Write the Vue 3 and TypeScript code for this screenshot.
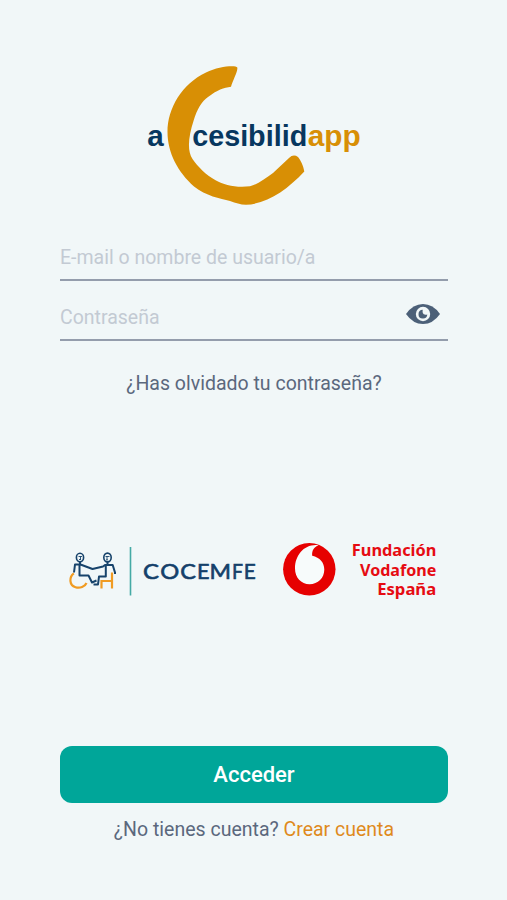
<script setup lang="ts">
import { ref } from 'vue'

interface Letter {
  char: string
  x: number
  width: number
}

const user = ref<string>('')
const password = ref<string>('')
const visible = ref<boolean>(false)

const wordmark: Letter[] = [
  { char: 'C', x: 75, width: 16 },
  { char: 'O', x: 92.3, width: 19 },
  { char: 'C', x: 112.2, width: 15.7 },
  { char: 'E', x: 129, width: 12.5 },
  { char: 'M', x: 141.6, width: 21.5 },
  { char: 'F', x: 164, width: 11 },
  { char: 'E', x: 175.8, width: 12 },
]
</script>

<template>
  <main class="screen">
    <svg class="logo" viewBox="0 0 230 160" role="img" aria-label="accesibilidapp">
      <path
        fill="#d88f05"
        d="M97.300 12.500C96 10 79 11 66 17.500C42 29 27.500 53 27.500 77C27.500 98 38 117 54 131.500C66 141 80 143.500 90 146C96 148 100 149.700 106 149.700C127 149 147 135 164.300 116.500C163.500 111 160.500 105 158 102C155 99.800 152 100 149 103L133 118C125 124 117 129.500 110 131.300C96 133 84 130 76 125.500C66 120 58 112 52.500 104C46.500 95 49 80 53.500 66C57 54 62 46 68 42C77 35 84 32.500 91 31.700C93 25 98 16 97.300 12.500Z"
      />
      <g class="brand" fill="#07375f">
        <text x="7.3" y="90.700" textLength="16.5" lengthAdjust="spacingAndGlyphs">a</text>
        <text x="52.2" y="90.700" textLength="115" lengthAdjust="spacingAndGlyphs">cesibilid</text>
        <text x="167.800" y="90.700" textLength="53" lengthAdjust="spacingAndGlyphs" fill="#d88f05">app</text>
      </g>
    </svg>

    <form class="form" @submit.prevent>
      <div class="field">
        <input v-model="user" type="text" placeholder="E-mail o nombre de usuario/a" />
      </div>
      <div class="field">
        <input v-model="password" :type="visible ? 'text' : 'password'" placeholder="Contraseña" />
        <button class="eye" type="button" aria-label="Mostrar contraseña" @click="visible = !visible">
          <svg viewBox="0 0 34 20">
            <path fill="#4c6078" d="M0 10Q7 0 17 0T34 10Q27 20 17 20T0 10Z" />
            <circle cx="17" cy="10" r="7.200" fill="#f1f7f8" />
            <path fill="#4c6078" d="M16.800 5.800A4.400 4.400 0 1 0 21.300 10.500Q17.500 11.200 16.800 9Q16.300 7.300 16.800 5.800Z" />
          </svg>
        </button>
      </div>
      <a class="forgot"><span>¿Has olvidado tu contraseña?</span></a>

      <div class="partners">
        <svg class="cocemfe" viewBox="0 0 190 62" role="img" aria-label="COCEMFE">
          <g fill="none" stroke="#f09b22" stroke-width="2.200">
            <path d="M5.800 33.300C1 37 1 45 7.500 47.200C12 48.700 17 46.500 18.500 43" />
            <path d="M33.500 48.500V41H43.500M44 32.500V48.500" />
          </g>
          <g fill="none" stroke="#17436b" stroke-width="2" stroke-linejoin="round">
            <ellipse cx="12" cy="17.500" rx="3.600" ry="4.200" stroke-width="1.600" />
            <ellipse cx="39.500" cy="17.500" rx="3.700" ry="4.400" stroke-width="1.600" />
            <path d="M10.500 16.500H14M12.500 16.500V19.500M37.500 16.500H41.500M39 16.500V19.500M11 19.500H13M38 19.800H40" stroke-width="0.900" />
            <path d="M12 22V24.500M39.500 22V25M6 32.500L7 24.500H12.500L24.500 29L35 26.500L37 25H44.700L47 32.500V34M11.500 25.500V35.500H20.500L24 42.500L28.500 40.500M37.800 26V36.500H31L30 44.500H25.500" />
          </g>
          <path d="M62.500 7V55.500" stroke="#45aaa5" stroke-width="1.600" />
          <text class="wordmark" y="39.300"><tspan
            v-for="(letter, i) in wordmark"
            :key="i"
            :x="letter.x"
            :textLength="letter.width"
            lengthAdjust="spacingAndGlyphs"
          >{{ letter.char }}</tspan></text>
        </svg>
        <svg class="vodafone" viewBox="0 0 165 70" role="img" aria-label="Fundación Vodafone España">
          <circle cx="34.300" cy="34.300" r="26.200" fill="#e60000" />
          <path fill="#f7fbfb" d="M43.500 10.200C39 12 36.700 15.500 37.200 20.700C45 22.500 49.300 27.500 49.300 34.500C49.300 43 43 49.200 34.600 49.200C26 49.200 20 42.500 20 33.500C20 20 29.500 8.500 43.500 10.200Z" />
          <g class="foundation" fill="#e60b12">
            <text x="76.800" y="21.300" textLength="84.500" lengthAdjust="spacingAndGlyphs">Fundación</text>
            <text x="85" y="40.500" textLength="76.300" lengthAdjust="spacingAndGlyphs">Vodafone</text>
            <text x="102.200" y="59.700" textLength="59" lengthAdjust="spacingAndGlyphs">España</text>
          </g>
        </svg>
      </div>

      <button class="submit" type="submit">Acceder</button>
      <p class="signup"><span>¿No tienes cuenta? <a>Crear cuenta</a></span></p>
    </form>
  </main>
</template>

<style>
body {
  background: #f1f7f8;
}
</style>

<style scoped>
.screen {
  box-sizing: border-box;
  width: 507px;
  height: 900px;
  padding: 55px 59px 0 60px;
  background: #f1f7f8;
  font-family: Roboto, sans-serif;
  font-size: 19.5px;
  color: #5b687d;
}
.logo {
  display: block;
  width: 230px;
  height: 160px;
  margin-left: 80px;
}
.brand {
  font: bold 30px "Liberation Sans", sans-serif;
}
.form {
  display: flex;
  flex-direction: column;
  padding-top: 21px;
}
.field {
  box-sizing: border-box;
  display: flex;
  align-items: flex-start;
  height: 60px;
  border-bottom: 2px solid #949dac;
}
.field:first-child {
  height: 45px;
}
.field + .field {
  padding-top: 15px;
}
input {
  flex: 1;
  min-width: 0;
  height: 42px;
  padding: 0;
  border: 0;
  outline: 0;
  background: transparent;
  font: inherit;
  color: #5b687d;
}
input::placeholder {
  color: #c3cad3;
  opacity: 1;
}
.eye {
  width: 34px;
  height: 20px;
  margin: 8px 8px 0 0;
  padding: 0;
  border: 0;
  background: none;
}
.eye svg {
  display: block;
  width: 34px;
  height: 20px;
}
.forgot {
  height: 24px;
  margin-top: 30px;
  line-height: 25px;
  text-align: center;
}
.partners {
  display: flex;
  height: 70px;
  margin-top: 140px;
}
.cocemfe {
  flex: none;
  width: 190px;
  height: 62px;
  margin: 5px 17px 0 8px;
}
.vodafone {
  flex: none;
  width: 165px;
  height: 70px;
}
.wordmark {
  fill: #14406a;
  stroke: #14406a;
  stroke-width: 0.6px;
  font: 400 20.800px Lato, sans-serif;
}
.foundation {
  font: bold 16px "Noto Sans", sans-serif;
}
.submit {
  height: 57px;
  margin-top: 141px;
  border: 0;
  border-radius: 12px;
  background: #00a699;
  color: #fff;
  font: 500 22px Roboto, sans-serif;
}
.signup {
  margin: 14px 0 0;
  line-height: 25px;
  text-align: center;
}
.signup a {
  color: #df8a1c;
}
</style>
